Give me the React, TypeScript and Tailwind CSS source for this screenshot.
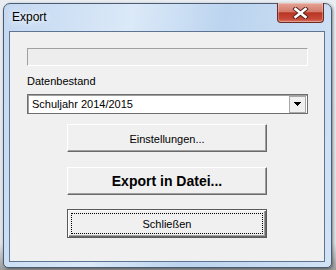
function DropArrow() {
  return (
    <svg width="7" height="4" viewBox="0 0 7 4" className="block">
      <rect x="0" y="0" width="7" height="1" fill="#000" />
      <rect x="1" y="1" width="5" height="1" fill="#000" />
      <rect x="2" y="2" width="3" height="1" fill="#000" />
      <rect x="3" y="3" width="1" height="1" fill="#000" />
    </svg>
  );
}

function CloseX() {
  return (
    <svg width="17" height="12" viewBox="0 0 17 12" className="block">
      <path d="M3.5 2 L13.5 10 M13.5 2 L3.5 10" stroke="#4f211b" strokeWidth="4.4" strokeLinecap="square" />
      <path d="M3.5 2 L13.5 10 M13.5 2 L3.5 10" stroke="#ffffff" strokeWidth="2.6" strokeLinecap="square" />
    </svg>
  );
}

const raised =
  "border border-t-white border-l-white border-b-[#696969] border-r-[#696969] shadow-[inset_-1px_-1px_0_#a0a0a0] bg-[#f0f0f0]";

export default function App() {
  return (
    <div className="w-[336px] h-[270px] overflow-hidden bg-[linear-gradient(180deg,#e9edf2_0%,#dfe3e8_90%,#9a9a9a_100%)] pt-[3px] pl-[3px] font-['Liberation_Sans',Arial,sans-serif]">
      <div className="w-[329px] h-[265px] rounded-t-[7px] rounded-b-[5px] border border-[#4a5c72] bg-[linear-gradient(100deg,#c3d8f1_0%,#dbe9f8_35%,#bcd4ef_60%,#d2e3f6_100%)] shadow-[1px_1px_3px_rgba(0,0,0,0.45)] flex flex-col">
        {/* title bar */}
        <div className="h-[27px] flex items-start shrink-0">
          <span className="mt-[6px] ml-[8px] text-[12px] leading-[15px] text-black [text-shadow:0_0_6px_#fff,0_0_10px_#fff]">
            Export
          </span>
          <div className="ml-auto mr-[7px] -mt-px w-[47px] h-[20px] rounded-b-[4px] border border-[#6e2a21] border-t-0 bg-[linear-gradient(180deg,#e4a396_0%,#d47c6c_45%,#b93523_52%,#c7493a_85%,#d97a66_100%)] shadow-[inset_0_0_0_1px_rgba(255,255,255,0.3)] flex items-center justify-center">
            <CloseX />
          </div>
        </div>

        {/* client area */}
        <div className="ml-[5px] w-[316px] h-[231px] border border-[#5d7593] bg-[#f0f0f0] flex flex-col text-[11px] leading-[13px] text-black">
          <div className="ml-[17px] mt-[16px] w-[281px] h-[18px] border border-t-[#a0a0a0] border-l-[#a0a0a0] border-b-white border-r-white bg-[#ededed]" />

          <div className="ml-[17px] mt-[9px]">Datenbestand</div>

          <div className="ml-[17px] mt-[6px] w-[281px] h-[20px] border border-[#6e6e6e] shadow-[inset_1px_1px_0_#a0a0a0] bg-white flex items-center">
            <span className="ml-[4px] flex-1">Schuljahr 2014/2015</span>
            <div className="mr-[1px] w-[17px] h-[17px] border border-[#a8a8a8] bg-[#f0f0f0] flex items-center justify-center">
              <DropArrow />
            </div>
          </div>

          <div className={`ml-[57px] mt-[10px] w-[200px] h-[28px] flex items-center justify-center pt-[2px] ${raised}`}>
            Einstellungen...
          </div>

          <div className={`ml-[57px] mt-[15px] w-[200px] h-[28px] flex items-center justify-center text-[14px] font-bold leading-[17px] ${raised}`}>
            Export in Datei...
          </div>

          <div className="ml-[57px] mt-[14px] w-[200px] h-[29px] border border-[#5a5a5a] bg-[#f0f0f0] shadow-[inset_1px_1px_0_#fff,inset_-1px_-1px_0_#696969,inset_-2px_-2px_0_#a0a0a0] flex">
            <div className="m-[3px] flex-1 border border-dotted border-black flex items-center justify-center pt-[1px]">
              Schließen
            </div>
          </div>
        </div>
      </div>
    </div>
  );
}
